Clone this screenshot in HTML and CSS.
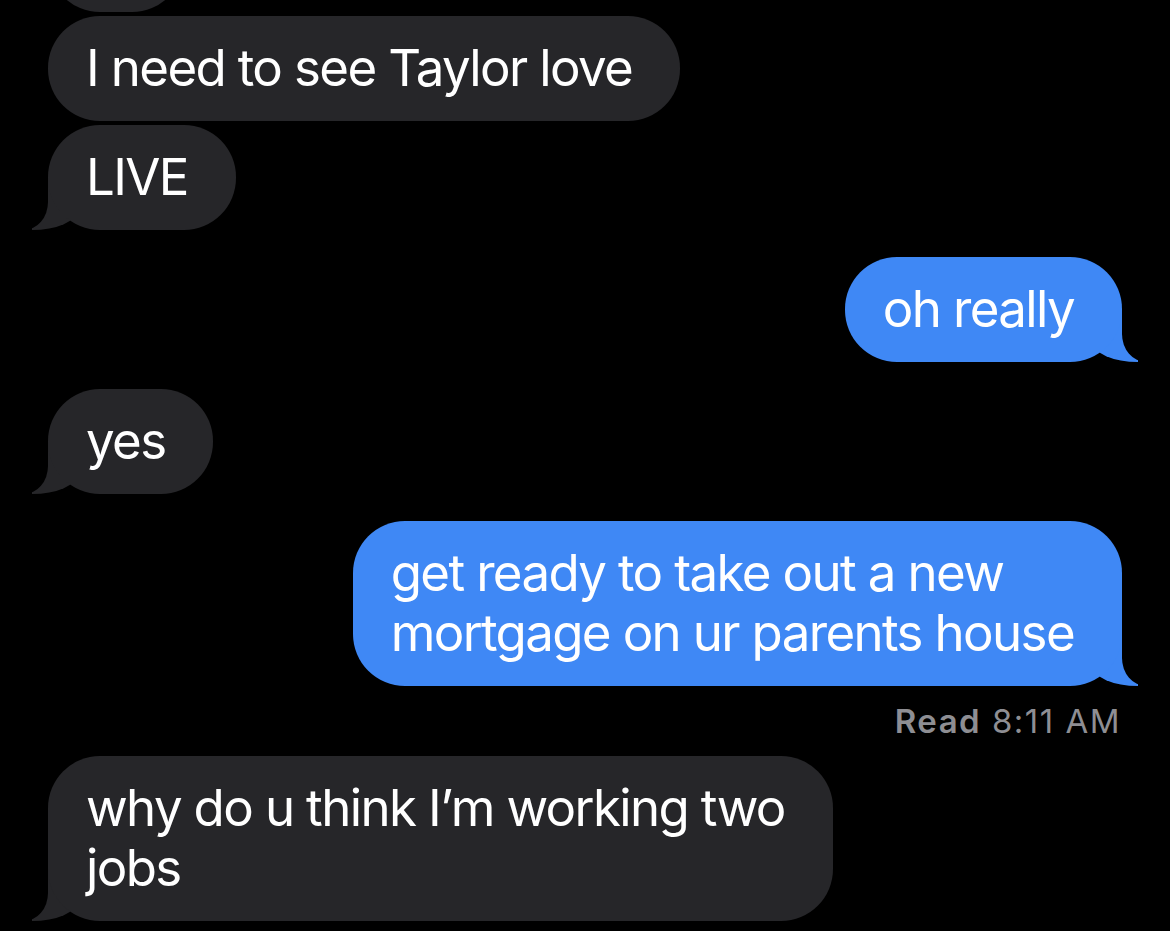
FILE: index.html
```html
<!DOCTYPE html>
<html lang="en">
<head>
    <meta charset="UTF-8">
    <meta name="viewport" content="width=device-width, initial-scale=1.0">
    <title>Messages</title>
    <link rel="stylesheet" href="styles.css">
</head>
<body>
    <div class="thread">
        <div class="bubble them clipped">lol</div>
        <div class="bubble them grouped">I need to see Taylor love</div>
        <div class="bubble them tail">LIVE</div>

        <div class="bubble me tail">oh really</div>

        <div class="bubble them tail">yes</div>

        <div class="bubble me tail">get ready to take out a new<br>mortgage on ur parents house</div>
        <div class="receipt"><strong>Read</strong> 8:11 AM</div>

        <div class="bubble them tail">why do u think I’m working two<br>jobs</div>
    </div>
</body>
</html>
```

FILE: styles.css
```css
body {
    margin: 0;
    background-color: #000;
    font-family: Inter, "Noto Sans", sans-serif;
    overflow: hidden;
}
.thread {
    display: flex;
    flex-direction: column;
    padding: 0 48px;
}
.bubble {
    position: relative;
    max-width: 720px;
    padding: 22px 48px 23px 38px;
    border-radius: 52px;
    font-size: 51px;
    line-height: 60px;
    letter-spacing: -0.032em;
    color: #fff;
    margin-top: 27px;
}
.them {
    align-self: flex-start;
    background-color: #262629;
}
.me {
    align-self: flex-end;
    background-color: #3f88f5;
}
/* first bubble is scrolled mostly out of view */
.clipped {
    margin-top: -93px;
}
.grouped {
    margin-top: 4px;
}
.grouped + .bubble {
    margin-top: 4px;
}

/* iMessage tail: coloured horn behind the bubble, outer edge carved by a black block */
.tail::before,
.tail::after {
    content: "";
    position: absolute;
    bottom: 0;
    z-index: -1;
    height: 52px;
}
.them.tail::before {
    left: -16px;
    width: 45px;
    background-color: #262629;
    border-bottom-right-radius: 45px 20px;
}
.them.tail::after {
    left: -40px;
    width: 40px;
    background-color: #000;
    border-bottom-right-radius: 24px 28px;
}
.me.tail::before {
    right: -16px;
    width: 45px;
    background-color: #3f88f5;
    border-bottom-left-radius: 45px 20px;
}
.me.tail::after {
    right: -40px;
    width: 40px;
    background-color: #000;
    border-bottom-left-radius: 24px 28px;
}

.receipt {
    align-self: flex-end;
    margin: 15px 1px 0;
    font-size: 33px;
    line-height: 40px;
    letter-spacing: 0.045em;
    color: #8e8e93;
}
.receipt strong {
    font-weight: 600;
}
.receipt + .bubble {
    margin-top: 15px;
}
```
